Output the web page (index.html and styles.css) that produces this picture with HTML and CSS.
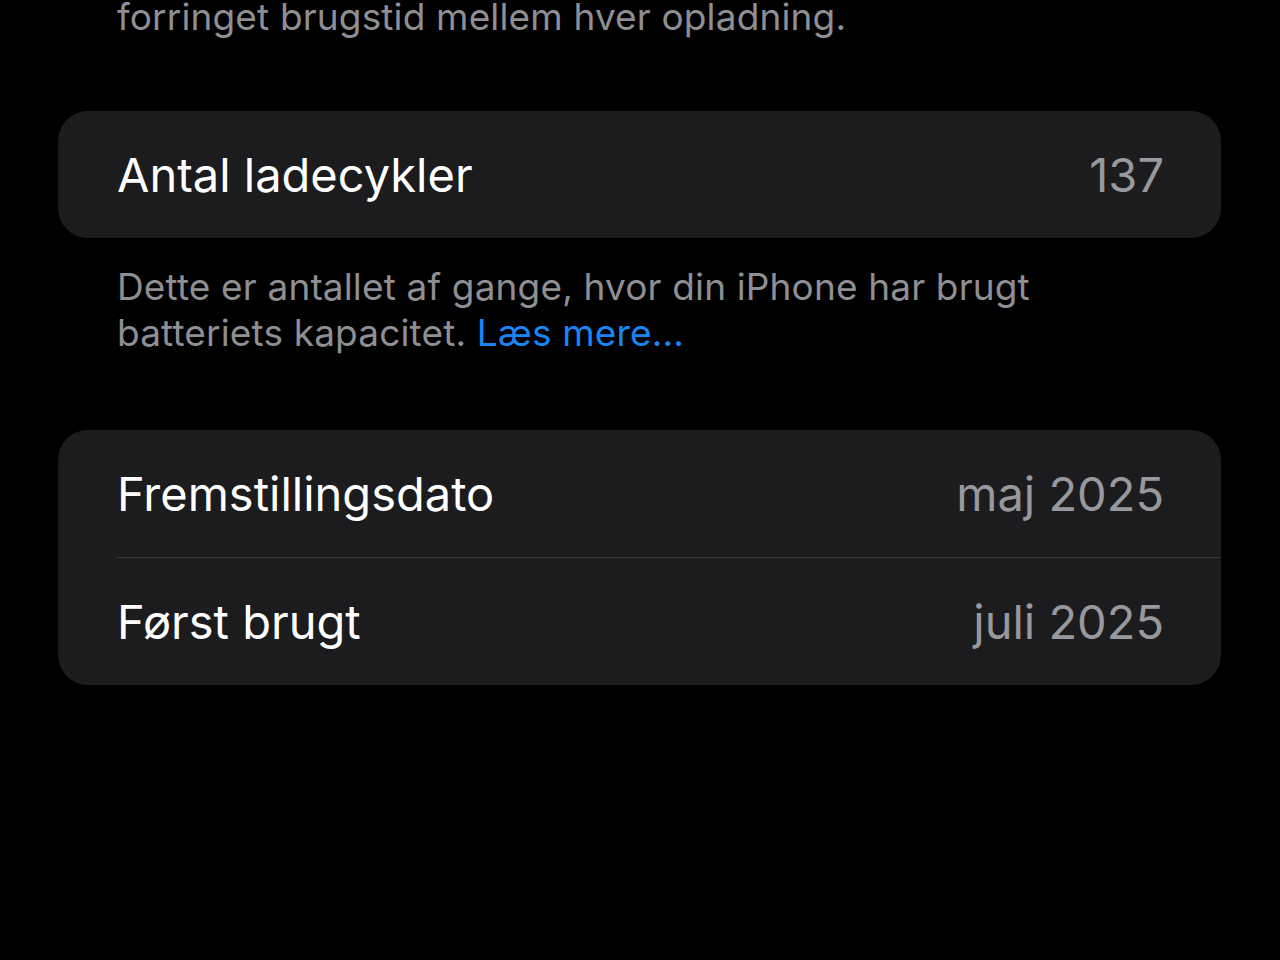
FILE: index.html
```html
<!DOCTYPE html>
<html lang="da">
<head>
  <meta charset="UTF-8">
  <title>Batteri</title>
  <link rel="stylesheet" href="styles.css">
</head>
<body>
  <div id="content">
    <p class="footer top">forringet brugstid mellem hver opladning.</p>

    <div class="group first">
      <div class="row">
        <div class="row-inner">
          <span class="label">Antal ladecykler</span>
          <span class="value">137</span>
        </div>
      </div>
    </div>
    <p class="footer">
      Dette er antallet af gange, hvor din iPhone har brugt<br>
      batteriets kapacitet. <a class="action" href="#">Læs mere...</a>
    </p>

    <div class="group second">
      <div class="row">
        <div class="row-inner">
          <span class="label">Fremstillingsdato</span>
          <span class="value">maj 2025</span>
        </div>
      </div>
      <div class="row">
        <div class="row-inner">
          <span class="label">Først brugt</span>
          <span class="value">juli 2025</span>
        </div>
      </div>
    </div>
  </div>
</body>
</html>
```

FILE: styles.css
```css
body {
    margin: 0;
    background: #000;
    color: #fff;
    font-family: 'Inter', 'Roboto', 'Noto Sans', sans-serif;
    overflow: hidden;
}
#content {
    padding: 0 59px 0 58px;
}
.footer {
    margin: 26px 0 0 0;
    padding: 0 60px 0 59px;
    font-size: 37px;
    letter-spacing: 0.15px;
    line-height: 46px;
    color: #8e8e93;
}
.footer.top {
    margin-top: -6px;
}
.action {
    color: #1a86f5;
    text-decoration: none;
}
.group {
    background: #1c1c1e;
    border-radius: 30px;
    overflow: hidden;
}
.group.first {
    margin-top: 71px;
}
.group.second {
    margin-top: 74px;
}
.row {
    padding-left: 58px;
}
.row-inner {
    height: 127px;
    display: flex;
    align-items: center;
    justify-content: space-between;
    padding: 0 57px 0 1px;
    font-size: 47px;
}
.row + .row .row-inner {
    border-top: 1px solid #38383a;
}
.label {
    color: #fff;
}
.value {
    color: #98989f;
}
```
